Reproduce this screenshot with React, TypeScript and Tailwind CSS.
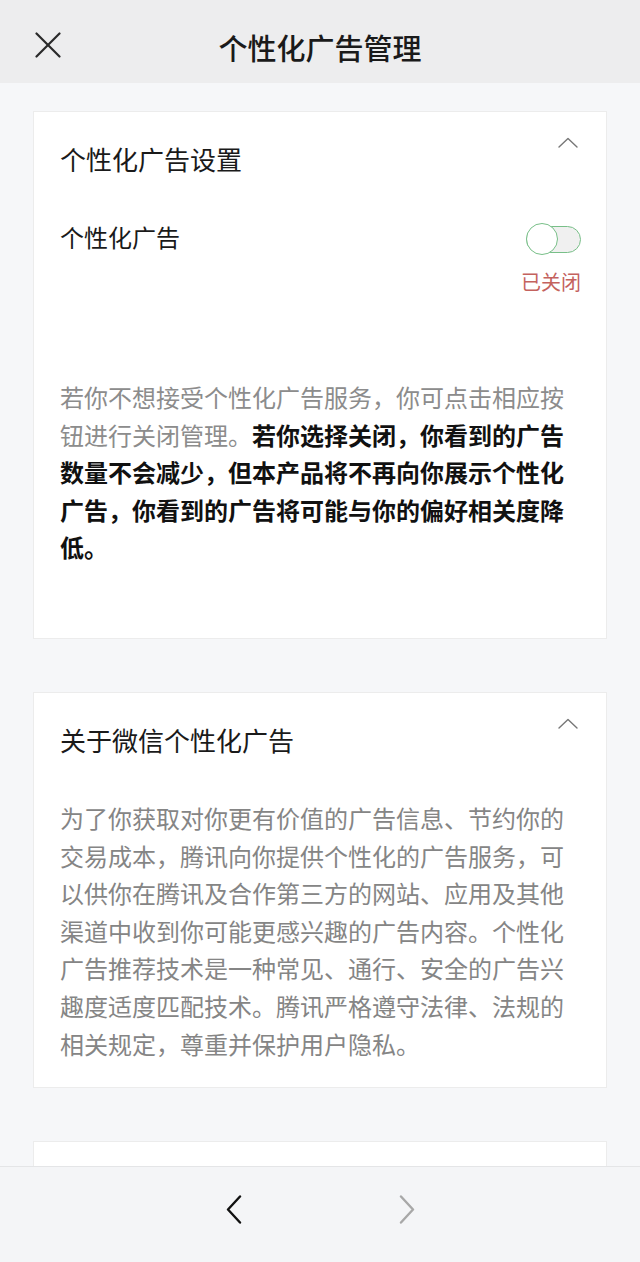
import type { ReactNode } from "react";

const font = "font-['Noto_Sans_CJK_SC','Noto_Sans',sans-serif]";

function CloseIcon() {
  return (
    <svg width="26" height="26" viewBox="0 0 26 26" fill="none" stroke="#2a2a2a" strokeWidth="2.2" strokeLinecap="round">
      <line x1="1.5" y1="1.5" x2="24.5" y2="24.5" />
      <line x1="24.5" y1="1.5" x2="1.5" y2="24.5" />
    </svg>
  );
}

function ChevronUp() {
  return (
    <svg width="20" height="11" viewBox="0 0 20 11" fill="none" stroke="#777" strokeWidth="1.4" strokeLinecap="round" strokeLinejoin="round">
      <polyline points="1,10 10,1.5 19,10" />
    </svg>
  );
}

function NavArrow({ dir, color }: { dir: "left" | "right"; color: string }) {
  const pts = dir === "left" ? "14,1.5 2,14.5 14,27.5" : "2,1.5 14,14.5 2,27.5";
  return (
    <svg width="16" height="29" viewBox="0 0 16 29" fill="none" stroke={color} strokeWidth="2.4" strokeLinecap="round" strokeLinejoin="round">
      <polyline points={pts} />
    </svg>
  );
}

// switch in its "off" state: grey track, knob on the left
function Toggle() {
  return (
    <div className="relative w-[55px] h-[32px]">
      <div className="absolute left-0 right-0 top-[3px] h-[27px] rounded-full border-[1.5px] border-[#78bf88] bg-[#f0f0f0]" />
      <div className="absolute left-0 top-0 w-[32px] h-[32px] rounded-full border-[1.5px] border-[#78bf88] bg-white" />
    </div>
  );
}

function Card({ title, children, className = "" }: { title: string; children: ReactNode; className?: string }) {
  return (
    <div className={`bg-white border border-[#ececec] pl-[26px] pr-[25px] pt-[25px] ${className}`}>
      <div className="flex items-start justify-between">
        <div className="mt-[4px] text-[26px] leading-[36px] text-[#1a1a1a]">{title}</div>
        <div className="mr-[3px]">
          <ChevronUp />
        </div>
      </div>
      {children}
    </div>
  );
}

export default function App() {
  return (
    <div className={`${font} w-[640px] h-[1262px] bg-[#f6f7f9] flex flex-col overflow-hidden`}>
      <header className="h-[83px] shrink-0 bg-[#ededee] relative flex items-center justify-center pt-[10px]">
        <div className="absolute left-[35px] top-[32px]">
          <CloseIcon />
        </div>
        <h1 className="text-[29px] leading-[40px] font-medium text-[#1a1a1a]">个性化广告管理</h1>
      </header>

      <main className="flex-1 overflow-hidden px-[33px] pt-[28px]">
        <Card title="个性化广告设置" className="pb-[72px]">
          <div className="mt-[42px] flex items-start justify-between">
            <div className="text-[24px] leading-[36px] text-[#1a1a1a]">个性化广告</div>
            <div className="mt-[4px] flex flex-col items-end">
              <Toggle />
              <div className="mt-[13px] text-[20px] leading-[28px] text-[#c4625e]">已关闭</div>
            </div>
          </div>
          <p className="mt-[82px] w-[506px] text-[24px] leading-[37.6px] text-[#8c8c8c]">
            若你不想接受个性化广告服务，你可点击相应按钮进行关闭管理。
            <span className="font-bold text-[#111]">
              若你选择关闭，你看到的广告数量不会减少，但本产品将不再向你展示个性化广告，你看到的广告将可能与你的偏好相关度降低。
            </span>
          </p>
        </Card>

        <Card title="关于微信个性化广告" className="mt-[53px] pb-[25px]">
          <p className="mt-[41px] w-[506px] text-[24px] leading-[37.6px] text-[#858585]">
            为了你获取对你更有价值的广告信息、节约你的交易成本，腾讯向你提供个性化的广告服务，可以供你在腾讯及合作第三方的网站、应用及其他渠道中收到你可能更感兴趣的广告内容。个性化广告推荐技术是一种常见、通行、安全的广告兴趣度适度匹配技术。腾讯严格遵守法律、法规的相关规定，尊重并保护用户隐私。
          </p>
        </Card>

        <div className="mt-[53px] h-[300px] bg-white border border-[#ececec]" />
      </main>

      <footer className="h-[96px] shrink-0 bg-[#f4f5f7] border-t border-[#e4e5e7] flex justify-center gap-[157px] pt-[28px]">
        <NavArrow dir="left" color="#111" />
        <NavArrow dir="right" color="#a8a8a8" />
      </footer>
    </div>
  );
}
